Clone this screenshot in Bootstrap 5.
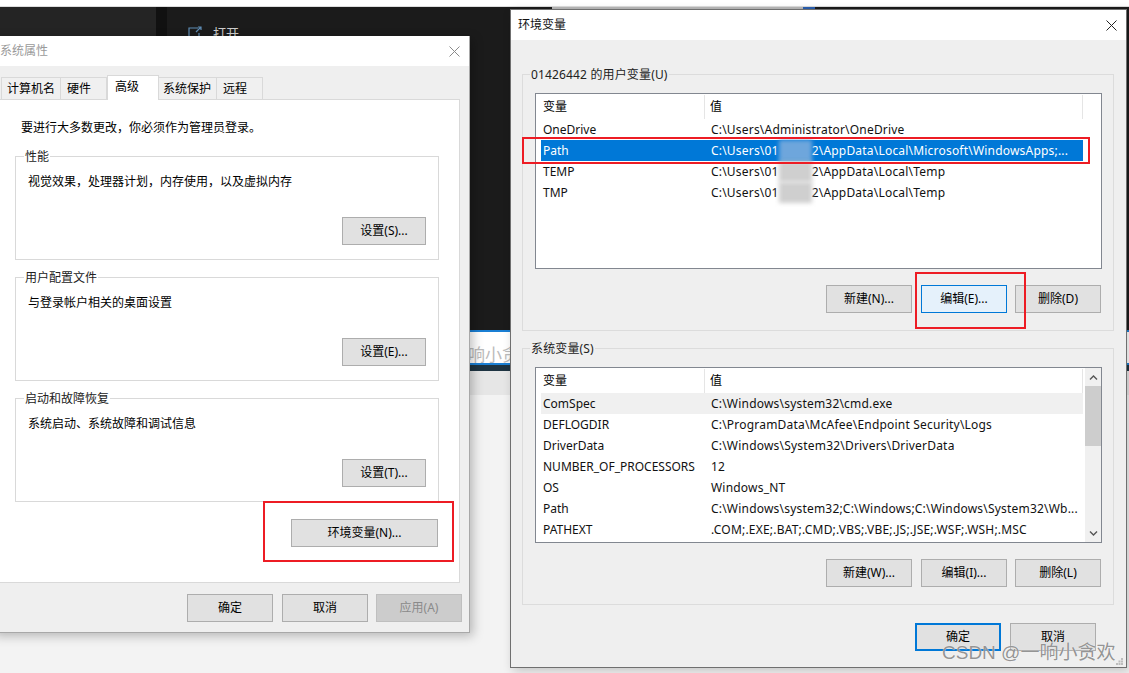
<!doctype html>
<html lang="zh"><head><meta charset="utf-8">
<link href="https://cdn.jsdelivr.net/npm/bootstrap@5.3.0/dist/css/bootstrap.min.css" rel="stylesheet">
<style>
html,body{margin:0;height:100%;overflow:hidden;background:#f3f3f3}
body{font-family:"Noto Sans","Noto Sans CJK SC",sans-serif;font-size:12px;color:#000}
.desk{position:relative;width:1129px;height:673px;overflow:hidden;background:#f3f3f3}
.desk-top{position:absolute;left:0;top:0;width:1129px;height:7px;background:#fff;border-bottom:1px solid #ddd}
.desk-a{position:absolute;left:0;top:7px;width:156px;height:323px;background:#242424}
.desk-b{position:absolute;left:156px;top:7px;width:11px;height:323px;background:#111}
.desk-c{position:absolute;left:167px;top:7px;width:962px;height:323px;background:#1b1b1b}
.strip-g{position:absolute;left:552px;top:7px;width:251px;height:2px;background:#b9b9b9}
.strip-b{position:absolute;left:803px;top:7px;width:12px;height:2px;background:#2a5fb0}
.open-item{position:absolute;left:188px;top:25px;color:#ccc;display:flex;gap:10px;font-size:13px;align-items:center;line-height:16px}
.search-box{position:absolute;left:440px;top:330px;width:689px;height:35px;background:#fff;border-top:2px solid #1a7fd4;border-bottom:2px solid #1a7fd4;color:#bbb;font-size:17px;line-height:31px;padding:7px 0 0 28px;white-space:nowrap;overflow:hidden}
.search-dark{position:absolute;left:440px;top:365px;width:689px;height:6px;background:#1e3442}
.search-grey{position:absolute;left:440px;top:371px;width:689px;height:24px;background:#e6e6e6}
.win{position:absolute;background:#efefef;display:flex;flex-direction:column}
.win-left{left:-8px;top:36px;width:478px;height:597px;border:1px solid #a8a8a8;border-left:0;border-top:0;box-shadow:3px 3px 10px rgba(0,0,0,.25)}
.win-right{left:510px;top:9px;width:617px;height:659px;border:1px solid #6f6f6f;box-shadow:3px 3px 10px rgba(0,0,0,.2)}
.titlebar{height:30px;background:#fff;display:flex;align-items:center;justify-content:space-between;flex:none}
.win-left .titlebar{color:#9a9a9a;padding:0 9px 0 8px}
.win-right .titlebar{padding:0 9px 0 7px;color:#111}
.tabrow{display:flex;align-items:flex-end;height:33px;flex:none;padding-left:9px}
.tabx{height:22px;border:1px solid #d9d9d9;border-left:0;border-bottom:0;background:#f0f0f0;line-height:22px;white-space:nowrap}
.t1{width:60px;padding-left:5px;border-left:1px solid #d9d9d9}
.t2{width:46px;padding-left:6px}
.t3{height:25px;width:52px;background:#fff;line-height:22px;padding-left:7px;border-left:1px solid #d9d9d9;margin-bottom:-1px;position:relative;z-index:1}
.t4{width:58px;padding-left:4px}
.t5{width:46px;padding-left:6px}
.tabpane{flex:none;width:468px;height:484px;background:#fff;border:1px solid #d9d9d9;border-left:0;position:relative;padding:20px 20px 0 23px}
.note{line-height:16px;height:16px;margin-left:6px}
.gbox{position:relative;border:1px solid #d9d9d9;width:424px;height:104px}
.gbox.first{margin-top:20px}
.gbox.second{margin-top:17px}
.glabel{position:absolute;left:8px;top:-8px;background:#fff;padding:0 1px;line-height:16px;color:#222;white-space:nowrap}
.gtext{position:absolute;left:12px;top:17px;line-height:16px;white-space:nowrap}
.wbtn{display:block;background:#e1e1e1;border:1px solid #adadad;border-radius:0;color:#000;font-size:12px;line-height:16px;padding:0;text-align:center;width:84px;height:28px;white-space:nowrap}
.wbtn.focus-blue{background:#e5f1fb;border-color:#0078d7}
.wbtn.defbtn{border:2px solid #0078d7}
.wbtn.off{background:#cccccc;color:#8a8a8a;border-color:#bfbfbf}
.gbtn{position:absolute;right:12px;bottom:14px}
.env-btn{position:absolute;left:299px;top:419px;width:147px}
.footrow{display:flex;gap:9px;padding:11px 0 0 195px}
.footrow .wbtn{width:86px}
.footrow .wbtn.off{margin-left:-1px}
.sec-cap{height:34px;flex:none}
.envbox{position:relative;margin-left:11px;width:592px;height:257px;border:1px solid #dcdcdc;flex:none}
.envbox.lower{margin-top:17px}
.blabel{position:absolute;left:7px;top:-8px;background:#efefef;padding:0 1px;line-height:16px;color:#222;white-space:nowrap;letter-spacing:.15px}
.lst{position:absolute;left:12px;top:18px;width:567px;height:176px;background:#fff;border:1px solid #828790;overflow:hidden}
.hd{display:flex;height:24px;line-height:24px;margin-top:1px}
.hd span:first-child{width:169px;padding-left:7px;border-right:1px solid #e5e5e5}
.hd span:last-child{width:378px;padding-left:5px;border-right:1px solid #e5e5e5}
.vrow{display:flex;height:21px;line-height:21px;margin-left:5px;width:542px;white-space:nowrap;color:#111}
.vrow b{font-weight:400;width:170px;padding-left:2px;flex:none}
.vrow i{font-style:normal;flex:none;letter-spacing:.2px}
.vrow.sel{background:#0078d7;color:#fff}
.vrow.hov{background:#f0f0f0}
.smudge{display:inline-block;width:33px;height:21px;vertical-align:top;background:#cfcfcf;filter:blur(2px)}
.sel .smudge{background:#6ea6dc}
.sbar{position:absolute;right:0;top:0;bottom:0;width:16px;background:#f0f0f0;display:flex;flex-direction:column;align-items:center}
.sbar-thumb{width:16px;height:60px;background:#cdcdcd}
.sbar svg{display:block;flex:none;margin:7px 0 6px}
.btns3{position:absolute;left:303px;bottom:17px;display:flex;gap:9px}
.btns3 .wbtn{width:86px}
.btns3 .wbtn:last-child{margin-left:-1px}
.foot2{position:absolute;left:404px;top:613px;display:flex;gap:9px}
.foot2 .wbtn{width:86px}
.grip{position:absolute;right:3px;bottom:2px}
.redbox{position:absolute;border:2px solid #ed1c24;pointer-events:none;z-index:5}
.wmark{position:absolute;left:942px;top:640px;font-family:"Liberation Sans","Noto Sans CJK SC",sans-serif;font-size:19px;line-height:26px;color:rgba(120,120,120,.8);text-shadow:0 0 1px #fff;z-index:6;white-space:nowrap}
</style></head><body>
<div class="desk">
 <div class="desk-a"></div><div class="desk-b"></div><div class="desk-c"></div><div class="desk-top"></div>
 <div class="strip-g"></div><div class="strip-b"></div>
 <div class="open-item"><svg width="15" height="14" viewBox="0 0 15 14" fill="none" stroke="#5f8db5" stroke-width="1.2"><path d="M10 2H1v10h10V7"/><path d="M8 6l5-5M10 1h3v3"/></svg><span>打开</span></div>
 <div class="search-box">响小贪</div><div class="search-dark"></div><div class="search-grey"></div>

 <div class="win win-left">
  <div class="titlebar"><span>系统属性</span><svg width="11" height="11" viewBox="0 0 11 11" stroke="#8a8a8a" fill="none"><path d="M.5.500l10 10M10.500.500l-10 10"/></svg></div>
  <div class="tabrow">
   <div class="tabx t1">计算机名</div><div class="tabx t2">硬件</div><div class="tabx t3">高级</div><div class="tabx t4">系统保护</div><div class="tabx t5">远程</div>
  </div>
  <div class="tabpane">
   <div class="note">要进行大多数更改，你必须作为管理员登录。</div>
   <div class="gbox first"><div class="glabel">性能</div><div class="gtext">视觉效果，处理器计划，内存使用，以及虚拟内存</div><button class="wbtn gbtn">设置(S)...</button></div>
   <div class="gbox second"><div class="glabel">用户配置文件</div><div class="gtext">与登录帐户相关的桌面设置</div><button class="wbtn gbtn">设置(E)...</button></div>
   <div class="gbox second"><div class="glabel">启动和故障恢复</div><div class="gtext">系统启动、系统故障和调试信息</div><button class="wbtn gbtn">设置(T)...</button></div>
   <button class="wbtn env-btn">环境变量(N)...</button>
  </div>
  <div class="footrow"><button class="wbtn">确定</button><button class="wbtn">取消</button><button class="wbtn off">应用(A)</button></div>
 </div>

 <div class="win win-right">
  <div class="titlebar"><span>环境变量</span><svg width="11" height="11" viewBox="0 0 11 11" stroke="#222" fill="none"><path d="M.5.500l10 10M10.500.500l-10 10"/></svg></div>
  <div class="sec-cap"></div>
  <div class="envbox"><div class="blabel">01426442 的用户变量(U)</div>
   <div class="lst">
    <div class="hd"><span>变量</span><span>值</span></div>
    <div class="vrow"><b>OneDrive</b><i>C:\Users\Administrator\OneDrive</i></div>
    <div class="vrow sel"><b>Path</b><i>C:\Users\01<span class="smudge"></span>2\AppData\Local\Microsoft\WindowsApps;...</i></div>
    <div class="vrow"><b>TEMP</b><i>C:\Users\01<span class="smudge"></span>2\AppData\Local\Temp</i></div>
    <div class="vrow"><b>TMP</b><i>C:\Users\01<span class="smudge"></span>2\AppData\Local\Temp</i></div>
   </div>
   <div class="btns3"><button class="wbtn">新建(N)...</button><button class="wbtn focus-blue">编辑(E)...</button><button class="wbtn">删除(D)</button></div>
  </div>
  <div class="envbox lower"><div class="blabel">系统变量(S)</div>
   <div class="lst">
    <div class="hd"><span>变量</span><span>值</span></div>
    <div class="vrow hov"><b>ComSpec</b><i>C:\Windows\system32\cmd.exe</i></div>
    <div class="vrow"><b>DEFLOGDIR</b><i>C:\ProgramData\McAfee\Endpoint Security\Logs</i></div>
    <div class="vrow"><b>DriverData</b><i>C:\Windows\System32\Drivers\DriverData</i></div>
    <div class="vrow"><b>NUMBER_OF_PROCESSORS</b><i>12</i></div>
    <div class="vrow"><b>OS</b><i>Windows_NT</i></div>
    <div class="vrow"><b>Path</b><i>C:\Windows\system32;C:\Windows;C:\Windows\System32\Wb...</i></div>
    <div class="vrow"><b>PATHEXT</b><i>.COM;.EXE;.BAT;.CMD;.VBS;.VBE;.JS;.JSE;.WSF;.WSH;.MSC</i></div>
    <div class="sbar"><svg width="9" height="5" viewBox="0 0 9 5" fill="none" stroke="#555" stroke-width="1.4"><path d="M1 4.500l3.500-3.500L8 4.500"/></svg><div class="sbar-thumb"></div><div class="flex-grow-1"></div><svg width="9" height="5" viewBox="0 0 9 5" fill="none" stroke="#555" stroke-width="1.4"><path d="M1 .5L4.500 4 8 .5"/></svg></div>
   </div>
   <div class="btns3"><button class="wbtn">新建(W)...</button><button class="wbtn">编辑(I)...</button><button class="wbtn">删除(L)</button></div>
  </div>
  <div class="foot2"><button class="wbtn defbtn">确定</button><button class="wbtn">取消</button></div>
  <svg class="grip" width="7" height="7" viewBox="0 0 7 7" fill="#a8a8a8"><rect x="5" y="0" width="2" height="2" opacity=".7"/><rect x="2.500" y="2.500" width="2" height="2" opacity=".7"/><rect x="5" y="2.500" width="2" height="2" opacity=".7"/><rect x="0" y="5" width="2" height="2" opacity=".7"/><rect x="2.500" y="5" width="2" height="2" opacity=".7"/><rect x="5" y="5" width="2" height="2" opacity=".7"/></svg>
 </div>

 <div class="redbox" style="left:263px;top:501px;width:191px;height:61px"></div>
 <div class="redbox" style="left:522px;top:137px;width:568px;height:27px"></div>
 <div class="redbox" style="left:915px;top:272px;width:111px;height:57px"></div>
 <div class="wmark">CSDN @一响小贪欢</div>
</div>
</body></html>
